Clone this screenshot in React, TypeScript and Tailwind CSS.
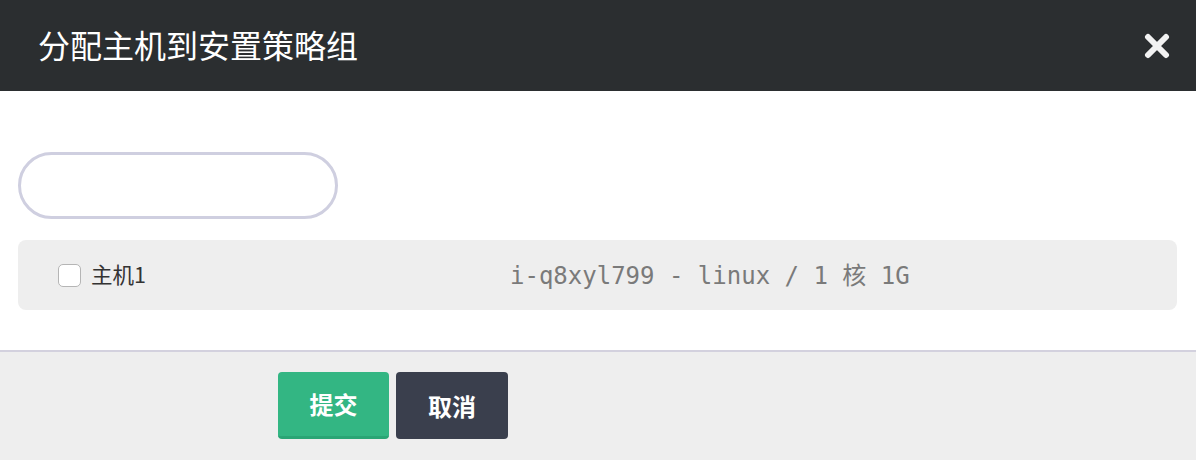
import React, { useState } from 'react';

const CJK = "font-['Noto_Sans_CJK_SC','Noto_Sans',sans-serif]";

export default function App() {
  const [keyword, setKeyword] = useState('');
  const [checked, setChecked] = useState(false);

  return (
    <div className={`w-[1196px] h-[460px] flex flex-col bg-white ${CJK}`}>
      {/* 标题栏 */}
      <div className="h-[91px] shrink-0 bg-[#2b2e30] flex items-center justify-between pl-[38px] pr-[26px]">
        <h1 className="text-[32px] leading-none text-white font-normal mb-[4px]">分配主机到安置策略组</h1>
        <button className="w-[26px] h-[26px] flex items-center justify-center" title="关闭">
          <svg width="26" height="26" viewBox="0 0 26 26">
            <path d="M4 4 L22 22 M22 4 L4 22" stroke="#f2f2f2" strokeWidth="6" strokeLinecap="round" />
          </svg>
        </button>
      </div>

      {/* 内容 */}
      <div className="flex-1 px-[18px] pt-[61px]">
        <input
          value={keyword}
          onChange={(e) => setKeyword(e.target.value)}
          className="block w-[320px] h-[67px] rounded-full border-[3px] border-[#cfcfe0] bg-white px-6 text-lg outline-none"
        />
        <label className="mt-[21px] h-[70px] w-[1159px] rounded-lg bg-[#eeeeee] flex items-center cursor-pointer">
          <div className="w-[492px] pl-[40px] flex items-center">
            <input
              type="checkbox"
              checked={checked}
              onChange={(e) => setChecked(e.target.checked)}
              className="w-[23px] h-[23px] appearance-none rounded-[5px] border border-[#b5b5b5] bg-white"
            />
            <span className="ml-[10px] text-[21.5px] text-[#333] mb-[2px]">主机1</span>
          </div>
          <span className="font-['DejaVu_Sans_Mono','Noto_Sans_CJK_SC',monospace] text-[24px] text-[#7a7a7a] mt-[2px]">
            i-q8xyl799 - linux / 1 核 1G
          </span>
        </label>
      </div>

      {/* 底部按钮 */}
      <div className="h-[110px] shrink-0 border-t-2 border-[#d3d1de] bg-[#eeeeee] pl-[278px] pt-[20px] flex items-start gap-[7px]">
        <button className="w-[111px] h-[67px] rounded-[4px] bg-[#33b683] border-b-[3px] border-[#2aa575] text-white text-[24px] font-bold">
          提交
        </button>
        <button className="w-[112px] h-[67px] rounded-[4px] bg-[#3a3f4d] text-white text-[24px] font-bold">
          取消
        </button>
      </div>
    </div>
  );
}
